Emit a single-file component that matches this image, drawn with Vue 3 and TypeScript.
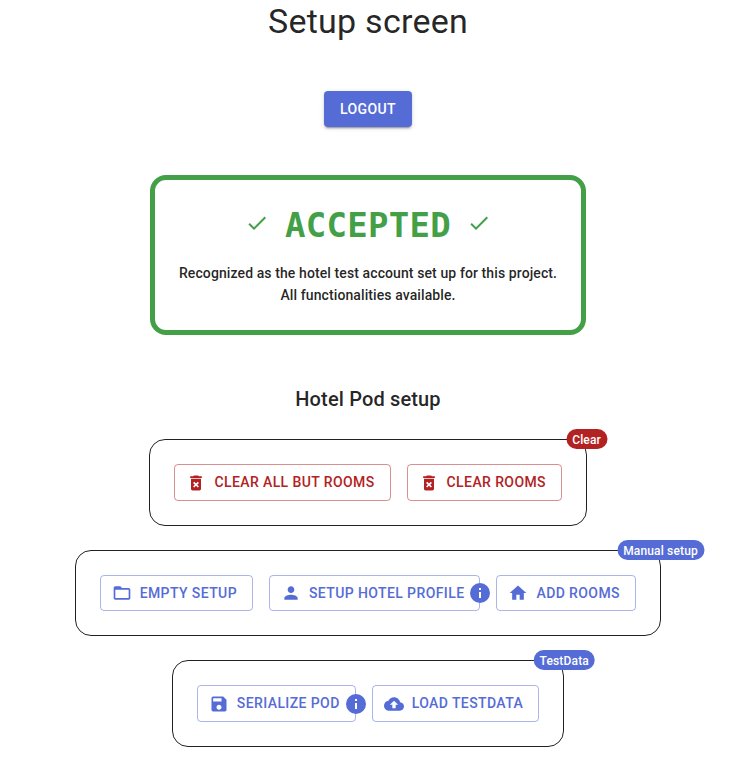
<script setup lang="ts">
interface Action {
  label: string
  icon: string
  info?: boolean
}

interface Group {
  id: string
  badge: string
  tone: 'error' | 'primary'
  actions: Action[]
}

const icons: Record<string, string> = {
  check: 'M9 16.17 4.83 12l-1.42 1.41L9 19 21 7l-1.41-1.41z',
  deleteForever:
    'M6 19c0 1.1.9 2 2 2h8c1.1 0 2-.9 2-2V7H6v12zm2.46-7.12 1.41-1.41L12 12.59l2.12-2.12 1.41 1.41L13.41 14l2.12 2.12-1.41 1.41L12 15.41l-2.12 2.12-1.41-1.41L10.59 14l-2.13-2.12zM15.5 4l-1-1h-5l-1 1H5v2h14V4z',
  folder:
    'M20 6h-8l-2-2H4c-1.1 0-1.99.9-1.99 2L2 18c0 1.1.9 2 2 2h16c1.1 0 2-.9 2-2V8c0-1.1-.9-2-2-2zm0 12H4V8h16v10z',
  person:
    'M12 12c2.21 0 4-1.79 4-4s-1.79-4-4-4-4 1.79-4 4 1.79 4 4 4zm0 2c-2.67 0-8 1.34-8 4v2h16v-2c0-2.66-5.33-4-8-4z',
  home: 'M10 20v-6h4v6h5v-8h3L12 3 2 12h3v8z',
  save: 'M17 3H5c-1.11 0-2 .9-2 2v14c0 1.1.89 2 2 2h14c1.1 0 2-.9 2-2V7l-4-4zm-5 16c-1.66 0-3-1.34-3-3s1.34-3 3-3 3 1.34 3 3-1.34 3-3 3zm3-10H5V5h10v4z',
  backup:
    'M19.35 10.04C18.67 6.59 15.64 4 12 4 9.11 4 6.6 5.64 5.35 8.04 2.34 8.36 0 10.91 0 14c0 3.31 2.69 6 6 6h13c2.76 0 5-2.24 5-5 0-2.64-2.05-4.78-4.65-4.96zM14 13v4h-4v-4H7l5-5 5 5h-3z',
}

const groups: Group[] = [
  {
    id: 'clear',
    badge: 'Clear',
    tone: 'error',
    actions: [
      { label: 'Clear all but rooms', icon: 'deleteForever' },
      { label: 'Clear rooms', icon: 'deleteForever' },
    ],
  },
  {
    id: 'manual',
    badge: 'Manual setup',
    tone: 'primary',
    actions: [
      { label: 'Empty setup', icon: 'folder' },
      { label: 'Setup hotel profile', icon: 'person', info: true },
      { label: 'Add rooms', icon: 'home' },
    ],
  },
  {
    id: 'testdata',
    badge: 'TestData',
    tone: 'primary',
    actions: [
      { label: 'Serialize pod', icon: 'save', info: true },
      { label: 'Load testdata', icon: 'backup' },
    ],
  },
]
</script>

<template>
  <main class="page">
    <h1 class="title">Setup screen</h1>
    <button class="logout" type="button">Logout</button>

    <section class="status">
      <div class="status-head">
        <svg class="check" viewBox="0 0 24 24"><path :d="icons.check" /></svg>
        <span class="status-word">ACCEPTED</span>
        <svg class="check" viewBox="0 0 24 24"><path :d="icons.check" /></svg>
      </div>
      <p class="status-text">
        Recognized as the hotel test account set up for this project.<br />
        All functionalities available.
      </p>
    </section>

    <h2 class="subtitle">Hotel Pod setup</h2>

    <div class="groups">
      <section v-for="g in groups" :key="g.id" class="group" :class="[g.tone, g.id]">
        <span class="badge group-badge">{{ g.badge }}</span>
        <div v-for="a in g.actions" :key="a.label" class="action">
          <button class="btn" type="button">
            <svg class="icon" viewBox="0 0 24 24"><path :d="icons[a.icon]" /></svg>
            {{ a.label }}
          </button>
          <span v-if="a.info" class="badge info-badge">
            <svg class="info" viewBox="0 0 24 24"><path d="M11 7h2v2h-2zm0 4h2v6h-2z" /></svg>
          </span>
        </div>
      </section>
    </div>
  </main>
</template>

<style>
body {
  background: #fff;
}
</style>

<style scoped>
.page {
  display: flex;
  flex-direction: column;
  align-items: center;
  width: 736px;
  font-family: Roboto, 'Liberation Sans', sans-serif;
  color: rgba(0, 0, 0, 0.87);
  letter-spacing: 0.00938em;
}

.title {
  margin: 0;
  font-size: 34px;
  font-weight: 400;
  line-height: 42px;
  letter-spacing: 0.00735em;
}

.logout,
.btn {
  display: inline-flex;
  align-items: center;
  box-sizing: border-box;
  margin: 0;
  border-radius: 4px;
  font-family: inherit;
  font-size: 14px;
  font-weight: 500;
  line-height: 1.75;
  letter-spacing: 0.02857em;
  text-transform: uppercase;
  white-space: nowrap;
}

.logout {
  margin-top: 48.9px;
  padding: 6px 16px;
  border: 0;
  background: #556cd6;
  color: #fff;
  box-shadow:
    0 3px 1px -2px rgba(0, 0, 0, 0.2),
    0 2px 2px 0 rgba(0, 0, 0, 0.14),
    0 1px 5px 0 rgba(0, 0, 0, 0.12);
}

.status {
  margin-top: 47.7px;
  padding: 24px;
  border: 5px solid #43a047;
  border-radius: 16px;
  text-align: center;
}

.status-head {
  display: flex;
  justify-content: center;
  gap: 16px;
  height: 42px;
  color: #43a047;
}

.status-word {
  font-family: 'DejaVu Sans Mono', monospace;
  font-size: 34px;
  font-weight: 700;
  line-height: 42px;
  letter-spacing: 0.00735em;
}

.check {
  width: 24px;
  height: 24px;
  margin-top: 7px;
  fill: currentColor;
}

.status-text {
  margin: 16px 0 0;
  font-size: 14px;
  font-weight: 500;
  line-height: 22px;
  letter-spacing: 0.00714em;
}

.subtitle {
  margin: 48px 0 24.25px;
  font-size: 20px;
  font-weight: 500;
  line-height: 32px;
  letter-spacing: 0.0075em;
}

.groups {
  display: flex;
  flex-direction: column;
  align-items: center;
  gap: 24px;
}

.group {
  position: relative;
  display: flex;
  gap: 16px;
  padding: 24px;
  border: 1px solid rgba(0, 0, 0, 0.87);
  border-radius: 16px;
}

.clear {
  margin-left: 0.4px;
}

.manual {
  margin-right: 0.4px;
}

.error {
  --tone: #b22222;
  --edge: rgba(178, 34, 34, 0.5);
}

.primary {
  --tone: #556cd6;
  --edge: rgba(85, 108, 214, 0.5);
}

.action {
  position: relative;
  display: flex;
}

.btn {
  padding: 5px 15px;
  border: 1px solid var(--edge);
  background: transparent;
  color: var(--tone);
}

.icon {
  width: 20px;
  height: 20px;
  margin: 0 8px 0 -4px;
  fill: currentColor;
}

.badge {
  position: absolute;
  right: 0;
  z-index: 1;
  display: flex;
  align-items: center;
  justify-content: center;
  box-sizing: border-box;
  min-width: 20px;
  height: 20px;
  padding: 0 6px;
  border-radius: 10px;
  background: var(--tone);
  color: #fff;
  font-size: 12px;
  font-weight: 500;
  line-height: 1;
  letter-spacing: 0.16px;
  white-space: nowrap;
  transform: translate(50%, -50%);
}

.group-badge {
  top: -1px;
  right: -0.6px;
  padding-top: 1.5px;
}

.clear .group-badge {
  min-width: 41px;
}

.manual .group-badge {
  right: -0.6px;
  min-width: 87px;
}

.testdata .group-badge {
  right: -1.1px;
  min-width: 61px;
}

.info-badge {
  top: 50%;
  width: 20px;
  padding: 0;
}

.info {
  flex: none;
  width: 24px;
  height: 24px;
  fill: currentColor;
}
</style>
